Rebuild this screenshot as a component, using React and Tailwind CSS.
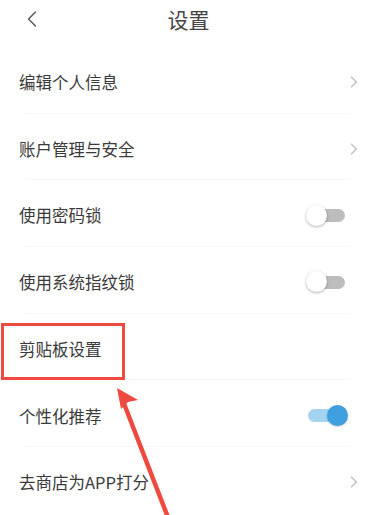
import React from "react";

const font = { fontFamily: '"Noto Sans CJK SC", "Noto Sans", sans-serif' };

function Chevron() {
  return (
    <svg width="8" height="12" viewBox="0 0 8 12" className="mr-[19px]">
      <path d="M1.5 1.2 L6.3 6 L1.5 10.8" fill="none" stroke="#c4c4c4" strokeWidth="1.6" strokeLinecap="round" strokeLinejoin="round" />
    </svg>
  );
}

function Switch({ on }) {
  return (
    <div className="relative w-[42px] h-[22px] mr-[29px]">
      <div
        className={
          "absolute left-[2px] right-[3px] top-[4.5px] h-[13px] rounded-full " +
          (on ? "bg-[#a3d3ee]" : "bg-[#bdbdbd]")
        }
      />
      {on ? (
        <div className="absolute right-0 top-0 w-[21px] h-[21px] rounded-full bg-[#3f9fdf] shadow-[0_1px_2px_rgba(0,0,0,0.2)]" />
      ) : (
        <div className="absolute left-0 top-0 w-[21px] h-[21px] rounded-full bg-white shadow-[0_1px_3px_rgba(0,0,0,0.3)]" />
      )}
    </div>
  );
}

const rows = [
  { t: "编辑个人信息", r: "chev" },
  { t: "账户管理与安全", r: "chev" },
  { t: "使用密码锁", r: "off" },
  { t: "使用系统指纹锁", r: "off" },
  { t: "剪贴板设置", r: "none" },
  { t: "个性化推荐", r: "on" },
  { t: "去商店为APP打分", r: "chev" },
];

export default function App() {
  return (
    <div className="relative w-[377px] h-[515px] bg-white overflow-hidden" style={font}>
      <div className="relative h-[40px] flex items-center justify-center">
        <svg width="12" height="16" viewBox="0 0 12 16" className="absolute left-[26px] top-[11px]">
          <path d="M9.5 1 L2.5 8 L9.5 15" fill="none" stroke="#555" strokeWidth="1.4" strokeLinecap="round" strokeLinejoin="round" />
        </svg>
        <span className="text-[21px] text-[#444] leading-none -mt-[1px]">设置</span>
      </div>
      <div className="mt-[9px] flex flex-col">
        {rows.map((row, i) => (
          <div key={i} className="relative h-[66.7px] flex items-center justify-between">
            <span className="ml-[19px] text-[16.5px] text-[#3a3a3a] leading-none">{row.t}</span>
            {row.r === "chev" && <Chevron />}
            {row.r === "off" && <Switch on={false} />}
            {row.r === "on" && <Switch on={true} />}
            {i < rows.length - 1 && (
              <div className="absolute bottom-[2px] left-[25px] right-[27px] h-px bg-[#f7f7f7]" />
            )}
          </div>
        ))}
      </div>
      <div className="absolute left-[1px] top-[323px] w-[124px] h-[57px] border-[3px] border-[#ee4a40]" />
      <svg className="absolute inset-0 pointer-events-none" width="377" height="515" viewBox="0 0 377 515">
        <line x1="123" y1="401" x2="169" y2="520" stroke="#ee4a40" strokeWidth="4.5" />
        <polygon points="117,388 138,400 128,402 121,409" fill="#ee4a40" />
      </svg>
    </div>
  );
}
